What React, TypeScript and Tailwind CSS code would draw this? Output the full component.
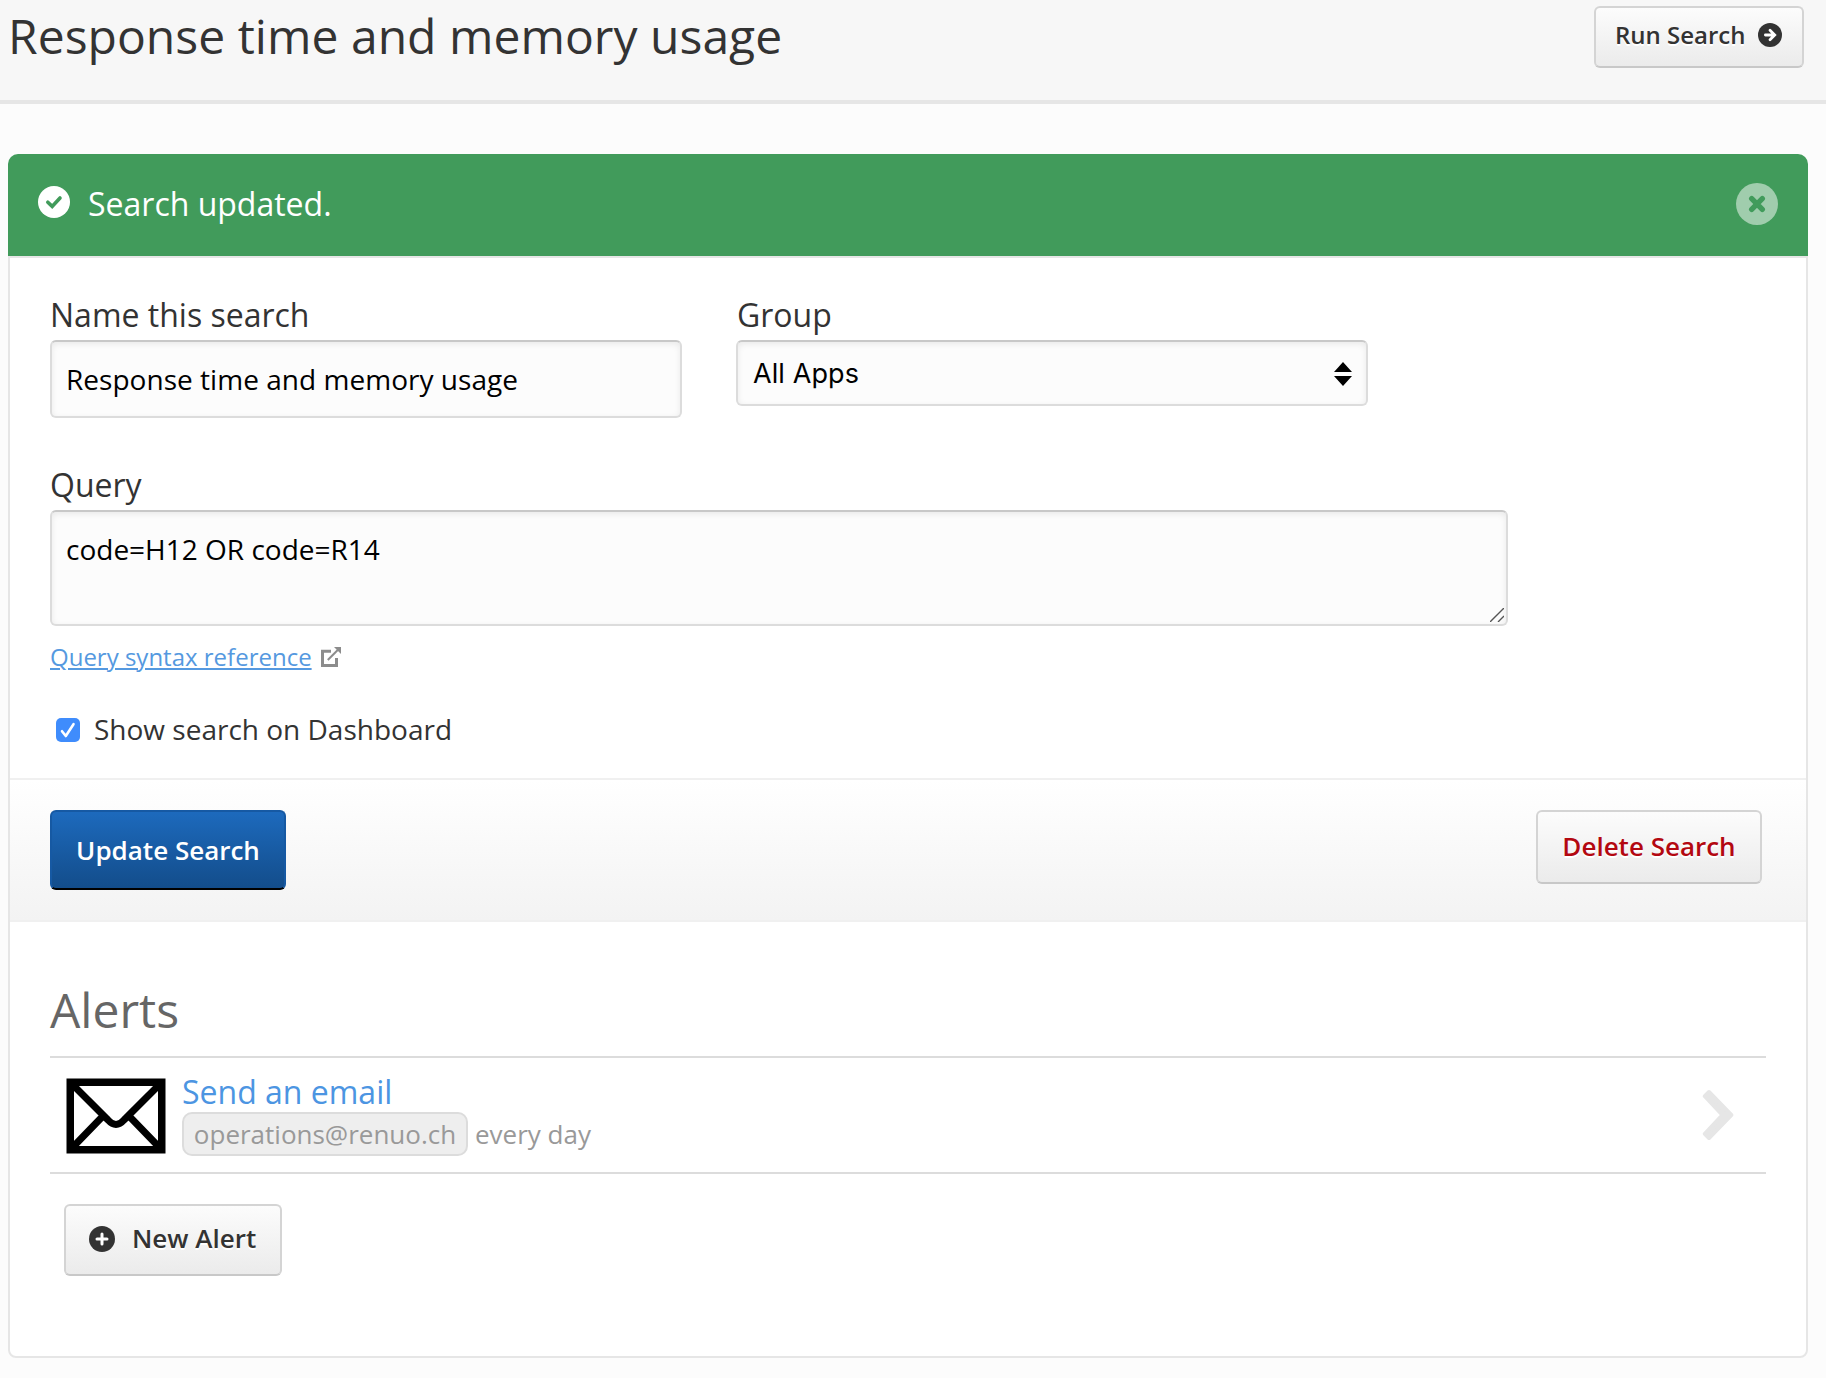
import React from "react";

const btn =
  "flex shrink-0 items-center whitespace-nowrap rounded-[6px] border-2 border-[#d4d4d4] border-b-[#c8c8c8] bg-linear-to-b from-[#fcfcfc] to-[#ebebeb] font-semibold [text-shadow:0_2px_0_#fff]";
const field =
  "rounded-[6px] border-2 border-[#dcdcdc] border-t-[#c8c8c8] bg-[#fcfcfc] text-black shadow-[inset_0_2px_6px_rgba(0,0,0,0.08)]";

function CheckCircle() {
  return (
    <svg width="32" height="32" viewBox="0 0 32 32" fill="none">
      <circle cx="16" cy="16" r="16" fill="#fff" />
      <path d="M9.8 16.2 14.2 20.4 22 12" stroke="#419b5b" strokeWidth="3.6" strokeLinecap="round" strokeLinejoin="miter" />
    </svg>
  );
}

function CloseCircle() {
  return (
    <svg width="42" height="42" viewBox="0 0 42 42" fill="none">
      <circle cx="21" cy="21" r="21" fill="#fff" fillOpacity="0.5" />
      <path d="M15.7 15.7 26.3 26.3M26.3 15.7 15.7 26.3" stroke="#419b5b" strokeWidth="5.4" strokeLinecap="round" />
    </svg>
  );
}

function ArrowCircle() {
  return (
    <svg width="24" height="24" viewBox="0 0 24 24" fill="none">
      <circle cx="12" cy="12" r="12" fill="#333" />
      <path d="M7.4 12H16M12 7.3 16.7 12 12 16.7" stroke="#fff" strokeWidth="2.8" strokeLinecap="round" strokeLinejoin="miter" />
    </svg>
  );
}

function PlusCircle() {
  return (
    <svg width="26" height="26" viewBox="0 0 26 26" fill="none">
      <circle cx="13" cy="13" r="13" fill="#333" />
      <path d="M8 13H18M13 8V18" stroke="#fff" strokeWidth="3" strokeLinecap="round" />
    </svg>
  );
}

function ExternalLink() {
  return (
    <svg width="20" height="20" viewBox="0 0 20 20" fill="none">
      <path d="M10 4.2H1.5V18.5H15.5V11" stroke="#8c8c8c" strokeWidth="3" />
      <path d="M6.8 13 17 2.8" stroke="#8c8c8c" strokeWidth="2" />
      <path d="M13 0H20V7Z" fill="#8c8c8c" />
    </svg>
  );
}

function Envelope() {
  return (
    <svg className="mt-[2px] blur-[0.7px]" width="100" height="76" viewBox="0 0 100 76" fill="none">
      <rect x="4.25" y="4.25" width="91.5" height="67.5" stroke="#000" strokeWidth="7.5" />
      <path d="M6 6 42 42Q50 51 58 42L94 6M6 70 37 38M94 70 63 38" stroke="#000" strokeWidth="7" />
    </svg>
  );
}

export default function App() {
  return (
    <div className="h-[1378px] w-[1826px] overflow-hidden bg-[#fcfcfc] font-['Open_Sans',sans-serif] text-[#333]">
      <header className="flex h-[104px] items-start justify-between border-b-4 border-[#e6e6e6] bg-[#f7f7f7] pl-2 pr-[22px]">
        <h1 className="whitespace-nowrap pt-[3px] text-[48px] leading-[66px] tracking-[0.03px]">Response time and memory usage</h1>
        <button className={`${btn} mt-[6px] h-[62px] w-[210px] pb-1 pl-[19px] text-[24px]`}>
          <span className="w-[143px] text-left">Run Search</span>
          <ArrowCircle />
        </button>
      </header>

      <main className="mx-2 mt-[50px] w-[1800px]">
        <div className="flex h-[102px] items-center rounded-t-[10px] bg-[#419b5b] px-[30px] text-white">
          <div className="pb-[6px]">
            <CheckCircle />
          </div>
          <span className="ml-[18px] flex-1 pb-[2px] text-[32px]">Search updated.</span>
          <button className="pb-[2px]">
            <CloseCircle />
          </button>
        </div>

        <section className="h-[1102px] rounded-b-[8px] border-2 border-[#e6e6e6] bg-white">
          <div className="h-[520px] px-10 pt-[34px]">
            <div className="flex gap-[54px]">
              <label className="flex w-[632px] flex-col">
                <span className="h-12 text-[32px] leading-[45px]">Name this search</span>
                <span className={`${field} flex h-[78px] items-center whitespace-nowrap pl-[14px] text-[28px] tracking-[0.03px]`}>
                  Response time and memory usage
                </span>
              </label>
              <label className="flex w-[632px] flex-col">
                <span className="h-12 pl-px text-[32px] leading-[45px]">Group</span>
                <span className={`${field} flex h-[66px] items-center justify-between pl-[15px] pr-[14px] pt-[2px] font-['Inter',sans-serif] text-[27px] tracking-[0.1px]`}>
                  All Apps
                  <svg width="18" height="24" viewBox="0 0 18 24">
                    <path d="M9 0 18 10H0ZM9 24 0 14H18Z" fill="#000" />
                  </svg>
                </span>
              </label>
            </div>

            <div className="mt-[44px]">
              <div className="h-12 text-[32px] leading-[45px]">Query</div>
              <div className={`${field} flex h-[116px] w-[1458px] justify-between pl-[14px] pt-[18px] text-[28px] leading-[38px]`}>
                code=H12 OR code=R14
                <svg className="mb-[2px] mr-[2px] self-end" width="14" height="14" viewBox="0 0 14 14">
                  <path d="M0 14 14 0M8 14 14 8" stroke="#555" strokeWidth="1.4" />
                </svg>
              </div>
            </div>

            <div className="mt-[11px] flex h-10 items-center gap-[9px] text-[24px] text-[#5599e0]">
              <a className="underline decoration-2 underline-offset-2">Query syntax reference</a>
              <ExternalLink />
            </div>

            <div className="mt-[33px] flex h-10 items-center gap-[14px] pl-[6px] text-[28px]">
              <svg width="24" height="24" viewBox="0 0 24 24" fill="none">
                <rect width="24" height="24" rx="5" fill="#3f8cfc" />
                <path d="M6 13.2 9.8 18 17.5 6.2" stroke="#fff" strokeWidth="2.6" strokeLinecap="round" strokeLinejoin="round" />
              </svg>
              <span className="pb-[2px]">Show search on Dashboard</span>
            </div>
          </div>

          <div className="flex h-[144px] items-start justify-between border-y-2 border-[#f0f0f0] bg-linear-to-b from-white to-[#f3f3f3] pl-10 pr-11 pt-[30px]">
            <button className="h-20 w-[236px] rounded-[6px] border-2 border-[#1659a3] border-b-black bg-linear-to-b from-[#1d6abd] to-[#134d8b] text-[26px] font-semibold text-white">
              Update Search
            </button>
            <button className={`${btn} h-[74px] w-[226px] justify-center pb-[2px] text-[26px] text-[#b30811]`}>Delete Search</button>
          </div>

          <div className="px-10 pt-[55px]">
            <h2 className="h-[79px] text-[48px] leading-[66px] text-[#666]">Alerts</h2>
            <div className="flex h-[118px] items-center border-y-2 border-[#dcdcdc] pl-4 pr-[32px]">
              <Envelope />
              <div className="ml-4 flex-1">
                <div className="h-[38px] text-[32px] leading-[36px] text-[#4c95e2]">Send an email</div>
                <div className="flex items-center text-[26px] text-[#999]">
                  <span className="flex h-[44px] w-[286px] items-center justify-center rounded-[10px] border-2 border-[#dcdcdc] bg-[#eee]">
                    operations@renuo.ch
                  </span>
                  <span className="ml-[7px]">every day</span>
                </div>
              </div>
              <svg width="32" height="52" viewBox="0 0 32 52">
                <path
                  d="M7 3 29.3 26 7 49 2.8 44.8 20.6 26 2.8 7.2Z"
                  transform="translate(0 0)"
                  fill="#e6e6e6"
                  stroke="#e6e6e6"
                  strokeWidth="4"
                  strokeLinejoin="round"
                />
              </svg>
            </div>
            <button className={`${btn} ml-[14px] mt-[30px] h-[72px] w-[218px] pb-1 pl-[23px] text-[26px]`}>
              <span className="pt-px">
                <PlusCircle />
              </span>
              <span className="ml-[17px]">New Alert</span>
            </button>
          </div>
        </section>
      </main>
    </div>
  );
}
